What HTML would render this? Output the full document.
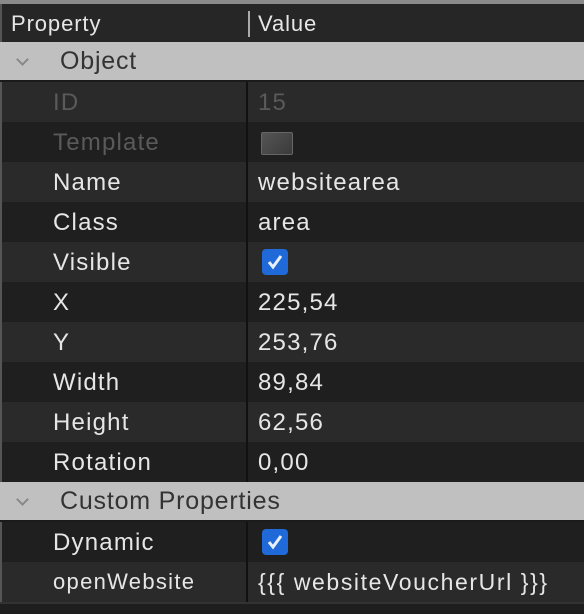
<!DOCTYPE html><html><head><style>
body{margin:0;width:584px;height:614px;background:#1e1e1e;overflow:hidden;font-family:"Liberation Sans",sans-serif;position:relative}
.top{position:absolute;left:0;top:0;width:584px;height:4px;background:#8a8a8a}
.hdr{position:absolute;left:0;top:4px;width:584px;height:38px;background:#262626;color:#e6e6e6;font-size:22px;letter-spacing:0.9px;border-left:2px solid #555;box-sizing:border-box}
.hdr span{position:absolute;top:7px}
.sep{position:absolute;left:246px;top:7px;width:2px;height:26px;background:#aaa}
.row{position:absolute;left:0;width:584px;height:40px;font-size:24px;letter-spacing:1.2px;color:#e6e6e6;border-left:2px solid #555;box-sizing:border-box}
.row .k{position:absolute;left:51px;top:7px}
.row .v{position:absolute;left:256px;top:7px}
.row .d{position:absolute;left:244px;top:0;width:2px;height:40px;background:#111}
.l{background:#2a2a2a}.dk{background:#1f1f1f}
.grp{position:absolute;left:0;width:584px;height:38px;background:#c0c0c0;color:#333;font-size:25px;letter-spacing:0.8px;border-bottom:2px solid #1a1a1a}
.grp .t{position:absolute;left:60px;top:5px}
.grp .c{position:absolute;left:18px;top:13px;width:7px;height:7px;border-right:2px solid #888;border-bottom:2px solid #888;transform:rotate(45deg)}
.dim{color:#5a5a5a}
.cb{position:absolute;left:260px;top:7px;width:26px;height:26px;background:#1f6ad8;border-radius:4px}
</style></head><body>
<div class="top"></div>
<div class="hdr"><span style="left:9px">Property</span><div class="sep"></div><span style="left:256px">Value</span></div>
<div class="grp" style="top:42px"><div class="c"></div><span class="t">Object</span></div>
<div class="row l dim" style="top:82px"><span class="k">ID</span><div class="d"></div><span class="v">15</span></div>
<div class="row dk dim" style="top:122px"><span class="k">Template</span><div class="d"></div><div style="position:absolute;left:259px;top:10px;width:30px;height:21px;background:linear-gradient(135deg,#555,#3a3a3a);border:1px solid #666;border-radius:2px"></div></div>
<div class="row l" style="top:162px"><span class="k">Name</span><div class="d"></div><span class="v">websitearea</span></div>
<div class="row dk" style="top:202px"><span class="k">Class</span><div class="d"></div><span class="v">area</span></div>
<div class="row l" style="top:242px"><span class="k">Visible</span><div class="d"></div><div class="cb"><svg width="26" height="26"><path d="M7 13l4 5 8-11" stroke="#e8eefa" stroke-width="3" fill="none"/></svg></div></div>
<div class="row dk" style="top:282px"><span class="k">X</span><div class="d"></div><span class="v">225,54</span></div>
<div class="row l" style="top:322px"><span class="k">Y</span><div class="d"></div><span class="v">253,76</span></div>
<div class="row dk" style="top:362px"><span class="k">Width</span><div class="d"></div><span class="v">89,84</span></div>
<div class="row l" style="top:402px"><span class="k">Height</span><div class="d"></div><span class="v">62,56</span></div>
<div class="row dk" style="top:442px"><span class="k">Rotation</span><div class="d"></div><span class="v">0,00</span></div>
<div class="grp" style="top:482px"><div class="c"></div><span class="t">Custom Properties</span></div>
<div class="row dk" style="top:522px"><span class="k">Dynamic</span><div class="d"></div><div class="cb"><svg width="26" height="26"><path d="M7 13l4 5 8-11" stroke="#e8eefa" stroke-width="3" fill="none"/></svg></div></div>
<div class="row l" style="top:562px"><span class="k" style="font-size:22px;letter-spacing:1.3px">openWebsite</span><div class="d"></div><span class="v" style="font-size:23px;letter-spacing:1.6px">{{{ websiteVoucherUrl }}}</span></div>
<div style="position:absolute;left:0;top:602px;width:584px;height:2px;background:#333"></div>
</body></html>
